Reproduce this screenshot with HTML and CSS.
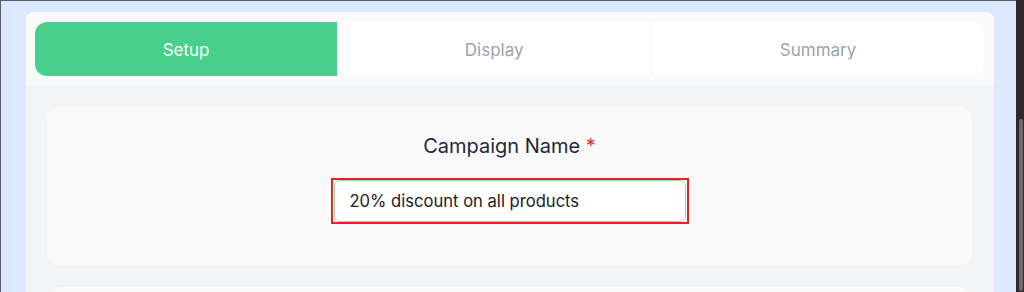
FILE: index.html
```html
<!DOCTYPE html>
<html lang="en">
    <head>
        <meta charset="UTF-8" />
        <meta name="viewport" content="width=device-width, initial-scale=1.0" />
        <title>Campaign Setup</title>
        <link rel="stylesheet" href="styles.css">
    </head>
    <body>
        <div class="viewport">
            <div class="panel">
                <div class="panel-header">
                    <div class="tabs">
                        <div class="tab active">Setup</div>
                        <div class="tab">Display</div>
                        <div class="tab">Summary</div>
                    </div>
                </div>
                <div class="panel-body">
                    <div class="section">
                        <label class="field-label" for="campaign-name">Campaign Name <span class="required">*</span></label>
                        <span class="highlight">
                            <input id="campaign-name" class="field-input" type="text" value="20% discount on all products">
                        </span>
                    </div>
                    <div class="section section-next"></div>
                </div>
            </div>
        </div>
        <div class="scrollbar">
            <div class="scrollbar-thumb"></div>
        </div>
    </body>
</html>
```

FILE: styles.css
```css
html,
body {
    margin: 0;
    height: 100%;
}

body {
    display: flex;
    overflow: hidden;
    font-family: "Inter", "Noto Sans", sans-serif;
    background-color: #2b2b2b;
}

.viewport {
    flex: 1;
    background-color: #dbe8fd;
    border-top: 1px solid #5b6068;
    border-left: 1px solid #5b6068;
    overflow: hidden;
}

/* Scrollbar strip on the right */
.scrollbar {
    width: 8px;
    padding-top: 119px;
    box-sizing: border-box;
    display: flex;
    justify-content: center;
}

.scrollbar-thumb {
    width: 4px;
    height: 172px;
    background-color: #6b6b6b;
    border-radius: 2px;
    margin-left: 2px;
}

/* Panel */
.panel {
    margin: 11px 22px 0 25px;
    background-color: #f3f4f6;
    border-radius: 8px 8px 0 0;
    overflow: hidden;
}

.panel-header {
    background-color: #f8fafc;
    padding: 10px 10px 9px 9px;
}

.tabs {
    display: flex;
    height: 54px;
    background-color: #fff;
    border-radius: 12px;
    overflow: hidden;
}

.tab {
    flex: 1 1 auto;
    display: flex;
    align-items: center;
    justify-content: center;
    padding-top: 1px;
    font-size: 17px;
    color: #9ca3af;
    border-right: 1px solid #f1f2f4;
}

.tab:last-child {
    border-right: none;
}

.tab.active {
    background-color: #48cf8a;
    color: #fff;
    border-right: none;
}

/* Body */
.panel-body {
    padding: 22px 22px 0 21px;
    display: flex;
    flex-direction: column;
    gap: 21px;
}

.section {
    background-color: #fafafa;
    border-radius: 12px;
    padding: 25px 0 41px;
    display: flex;
    flex-direction: column;
    align-items: center;
}

.section-next {
    height: 40px;
    padding: 0;
    border: 1px solid #f0f1f3;
}

.field-label {
    font-size: 20px;
    line-height: 28px;
    color: #1f2937;
    margin-bottom: 18px;
}

.required {
    color: #ef2b2b;
}

.highlight {
    display: inline-flex;
    border: 2px solid #f21d1d;
    padding: 0 1px;
}

.field-input {
    width: 352px;
    height: 42px;
    box-sizing: border-box;
    border: 1px solid #8fdcb2;
    border-radius: 6px;
    padding: 0 15px;
    font-family: inherit;
    font-size: 16.6px;
    color: #222;
    background-color: #fff;
    outline: none;
}
```
